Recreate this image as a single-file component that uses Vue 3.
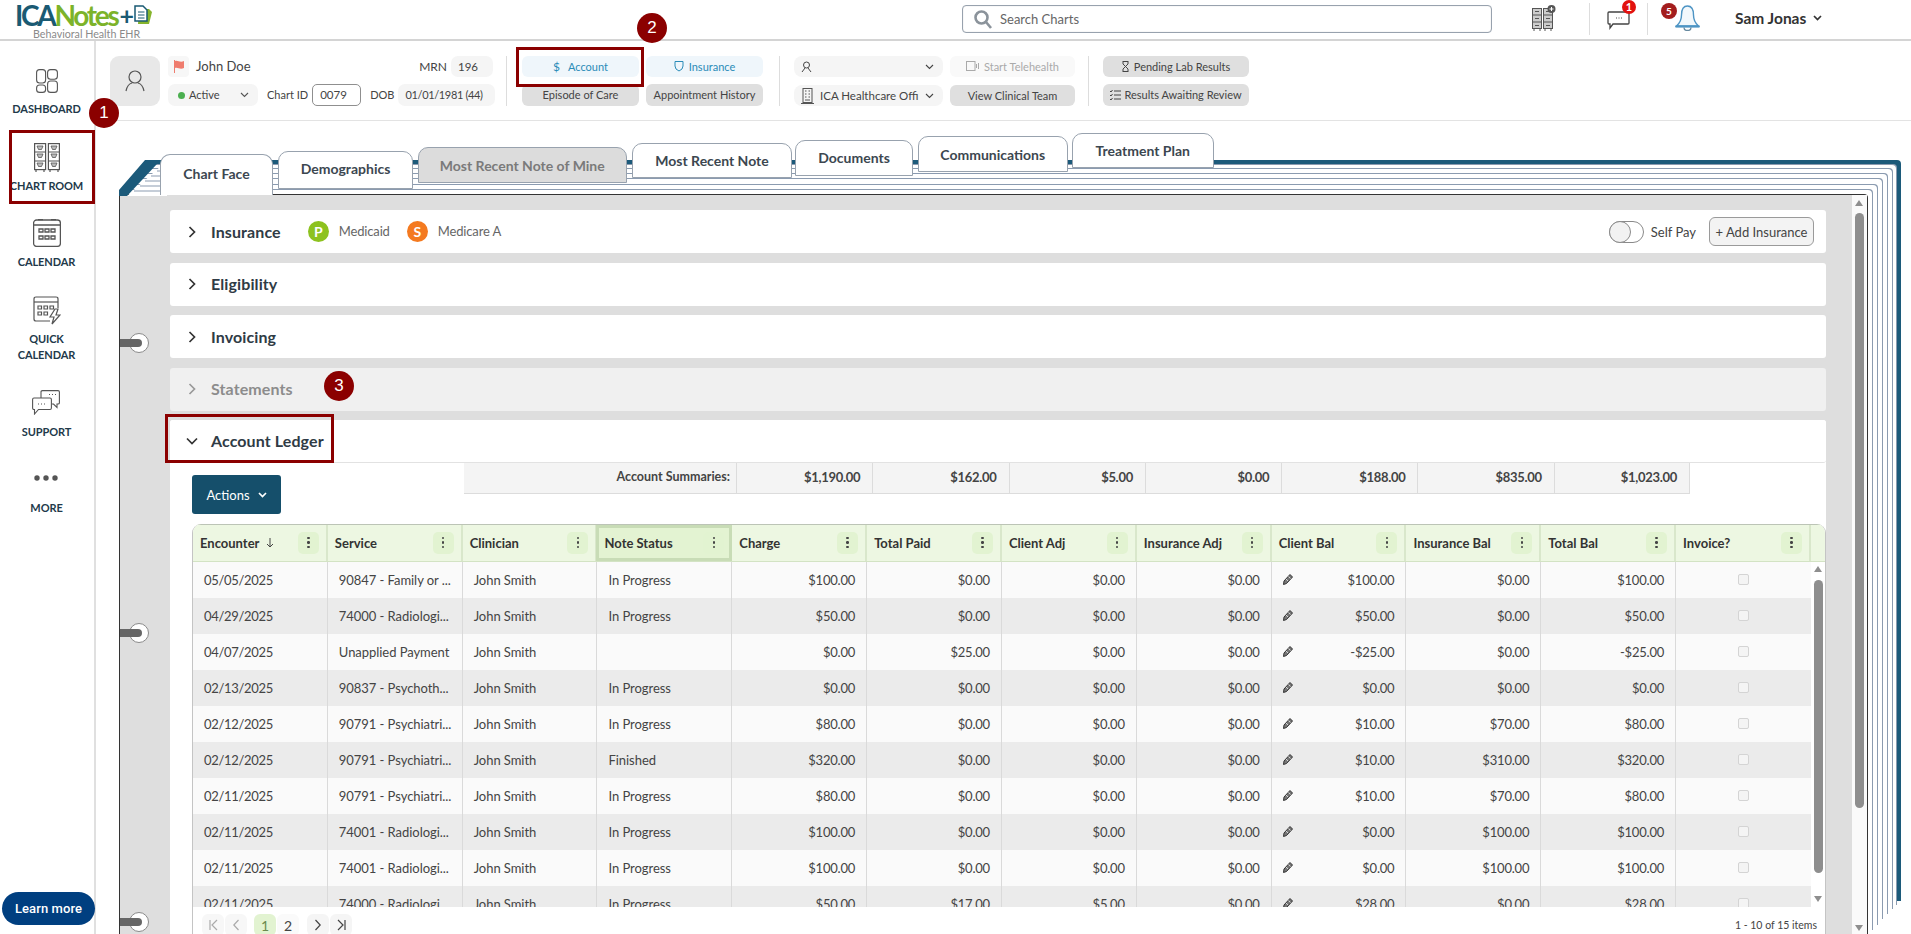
<script setup>
const tabs = [
  { label: 'Chart Face', w: 113, top: 21, h: 41, pb: 3, cls: 'active' },
  { label: 'Demographics', w: 135, top: 18, h: 38, gap: 5, pb: 3 },
  { label: 'Most Recent Note of Mine', w: 209.5, top: 14, h: 36, gap: 4.5, cls: 'muted' },
  { label: 'Most Recent Note', w: 160, top: 10, h: 35, gap: 5 },
  { label: 'Documents', w: 118, top: 7, h: 36, gap: 3, pb: 1 },
  { label: 'Communications', w: 150.5, top: 3, h: 36, gap: 4.5 },
  { label: 'Treatment Plan', w: 141.5, top: 0, h: 35, gap: 4 },
]
const summaries = ['$1,190.00', '$162.00', '$5.00', '$0.00', '$188.00', '$835.00', '$1,023.00']
const columns = ['Encounter', 'Service', 'Clinician', 'Note Status', 'Charge', 'Total Paid', 'Client Adj', 'Insurance Adj', 'Client Bal', 'Insurance Bal', 'Total Bal', 'Invoice?']
const rows = [
  ['05/05/2025', '90847 - Family or ...', 'In Progress', '$100.00', '$0.00', '$0.00', '$0.00', '$100.00', '$0.00', '$100.00'],
  ['04/29/2025', '74000 - Radiologi...', 'In Progress', '$50.00', '$0.00', '$0.00', '$0.00', '$50.00', '$0.00', '$50.00'],
  ['04/07/2025', 'Unapplied Payment', '', '$0.00', '$25.00', '$0.00', '$0.00', '-$25.00', '$0.00', '-$25.00'],
  ['02/13/2025', '90837 - Psychoth...', 'In Progress', '$0.00', '$0.00', '$0.00', '$0.00', '$0.00', '$0.00', '$0.00'],
  ['02/12/2025', '90791 - Psychiatri...', 'In Progress', '$80.00', '$0.00', '$0.00', '$0.00', '$10.00', '$70.00', '$80.00'],
  ['02/12/2025', '90791 - Psychiatri...', 'Finished', '$320.00', '$0.00', '$0.00', '$0.00', '$10.00', '$310.00', '$320.00'],
  ['02/11/2025', '90791 - Psychiatri...', 'In Progress', '$80.00', '$0.00', '$0.00', '$0.00', '$10.00', '$70.00', '$80.00'],
  ['02/11/2025', '74001 - Radiologi...', 'In Progress', '$100.00', '$0.00', '$0.00', '$0.00', '$0.00', '$100.00', '$100.00'],
  ['02/11/2025', '74001 - Radiologi...', 'In Progress', '$100.00', '$0.00', '$0.00', '$0.00', '$0.00', '$100.00', '$100.00'],
  ['02/11/2025', '74000 - Radiologi...', 'In Progress', '$50.00', '$17.00', '$5.00', '$0.00', '$28.00', '$0.00', '$28.00'],
]
const rings = [148, 438, 727]
</script>

<template>
  <div class="app">
    <header class="topbar">
      <div class="logo-area">
        <div class="logo">
          <div class="logo-line">
            <span class="logo-ica">ICA</span><span class="logo-notes">Notes</span><span class="logo-plus">+</span>
            <svg class="logo-doc" width="18" height="20" viewBox="0 0 18 20">
              <path d="M5 4 H15 L18 7 L15 19 H4 Z" fill="#86b42c"/>
              <path d="M1 1 H9 L13 5 V16 H1 Z" fill="#fff" stroke="#1a5a73" stroke-width="1.5"/>
              <path d="M4 7 H10.5 M4 10 H10.5 M4 13 H10.5" stroke="#1a5a73"/>
            </svg>
          </div>
          <div class="logo-sub">Behavioral Health EHR</div>
        </div>
      </div>
      <div class="search">
        <svg width="18" height="19" viewBox="0 0 18 19" fill="none" stroke="#8b939b" stroke-width="2.6">
          <circle cx="7.5" cy="7.5" r="6"/><path d="M12 12 L17 18"/>
        </svg>
        <span>Search Charts</span>
      </div>
      <svg class="ic-cabinet-add" width="24" height="26" viewBox="0 0 24 26" fill="none" stroke="#555">
        <rect x="0.5" y="3.5" width="9" height="20" fill="#ccc"/><rect x="11.5" y="3.5" width="9" height="20" fill="#ccc"/>
        <path d="M1 10 H9 M1 17 H9 M12 10 H20 M12 17 H20 M3 6.5 H7 M3 13.5 H7 M3 20.5 H7 M14 6.5 H18 M14 13.5 H18 M14 20.5 H18 M2 24 V26 M8 24 V26 M13 24 V26 M19 24 V26"/>
        <circle cx="19.5" cy="4" r="4" fill="#555" stroke="none"/>
        <path d="M17.5 4 H21.5 M19.5 2 V6" stroke="#fff"/>
      </svg>
      <span class="top-divider first"></span>
      <div class="chat">
        <svg width="23" height="19" viewBox="0 0 23 19" fill="none" stroke="#444" stroke-width="1.3">
          <path d="M2 1 H21 Q22 1 22 2 V12 Q22 13 21 13 H6 L3 17 V13 H2 Q1 13 1 12 V2 Q1 1 2 1 Z"/>
          <path d="M9 7 H10 M11.5 7 H12.5 M14 7 H15" stroke="#888"/>
        </svg>
        <span class="badge red">1</span>
      </div>
      <span class="top-divider"></span>
      <div class="bell">
        <svg width="25" height="26" viewBox="0 0 25 26" fill="none" stroke="#4d94c4" stroke-width="1.4">
          <path d="M12.5 1 C7.5 1 6.5 6 6.5 10 C6.5 15 5 18 1.5 21 H23.5 C20 18 18.5 15 18.5 10 C18.5 6 17.5 1 12.5 1 Z" fill="#f2f8fc"/>
          <path d="M0.5 21.5 H24.5" stroke="#4d94c4" stroke-width="2.2"/>
          <path d="M9 22.5 C9 26.5 16 26.5 16 22.5" stroke="#66899f"/>
        </svg>
        <span class="badge dark">5</span>
      </div>
      <span class="user">Sam Jonas</span>
      <svg class="user-caret" width="9" height="6" viewBox="0 0 9 6" fill="none" stroke="#333" stroke-width="1.7"><path d="M1 1 L4.5 4.5 L8 1"/></svg>
    </header>

    <div class="main">
      <aside class="sidebar">
        <div class="nav-item dash">
          <svg width="22" height="24" viewBox="0 0 22 24" fill="none" stroke="#555" stroke-width="1.1">
            <rect x="0.6" y="0.6" width="9" height="13.4" rx="3"/><rect x="11.6" y="0.6" width="9.8" height="9.6" rx="3"/>
            <rect x="0.6" y="16" width="9" height="7.4" rx="3"/><rect x="11.6" y="12" width="9.8" height="11.4" rx="3"/>
          </svg>
          <span>DASHBOARD</span>
        </div>
        <div class="nav-item chart">
          <svg width="26" height="29" viewBox="0 0 26 29" fill="none" stroke="#555" stroke-width="1.2">
            <rect x="0.6" y="0.6" width="11" height="26"/><rect x="14.4" y="0.6" width="11" height="26"/>
            <path d="M1 9 H11 M1 18 H11 M15 9 H25 M15 18 H25 M2 27 V29 M10 27 V29 M16 27 V29 M24 27 V29"/>
            <path d="M3 3 H9 L7.5 6.5 H4.5 Z M3 11 H9 L7.5 14.5 H4.5 Z M3 20 H9 L7.5 23.5 H4.5 Z M17 3 H23 L21.5 6.5 H18.5 Z M17 11 H23 L21.5 14.5 H18.5 Z M17 20 H23 L21.5 23.5 H18.5 Z" fill="#bbb" stroke-width="0.8"/>
          </svg>
          <span>CHART ROOM</span>
        </div>
        <div class="nav-item cal">
          <svg width="28" height="28" viewBox="0 0 28 28" fill="none" stroke="#555" stroke-width="1.3">
            <rect x="0.6" y="1" width="26.8" height="26.4" rx="3"/><path d="M1 6 H27 M5 0.6 H10 M18 0.6 H23"/>
            <path d="M6 10 H10 V13 H6 Z M12 10 H16 V13 H12 Z M18 10 H22 V13 H18 Z M6 17 H10 V20 H6 Z M12 17 H16 V20 H12 Z M18 17 H22 V20 H18 Z"/>
          </svg>
          <span>CALENDAR</span>
        </div>
        <div class="nav-item quick">
          <svg width="28" height="29" viewBox="0 0 28 29" fill="none" stroke="#555" stroke-width="1.2">
            <path d="M25 12 V3 Q25 1 23 1 H3 Q1 1 1 3 V23 Q1 25 3 25 H17"/><path d="M1 6 H25"/>
            <path d="M5 10 H8.5 V13 H5 Z M11 10 H14.5 V13 H11 Z M17 10 H20.5 V13 H17 Z M5 16 H8.5 V19 H5 Z M11 16 H14.5 V19 H11 Z"/>
            <path d="M22 13 L17 21 H21 L19 28 L27 19 H23 L25 13 Z" fill="#fff"/>
          </svg>
          <span>QUICK<br>CALENDAR</span>
        </div>
        <div class="nav-item support">
          <svg width="28" height="25" viewBox="0 0 28 25" fill="none" stroke="#555" stroke-width="1.1">
            <path d="M9 9 V2 Q9 0.6 10.5 0.6 H26 Q27.4 0.6 27.4 2 V13 Q27.4 14 26 14 H25 V17.5 L21.5 14 H20"/>
            <path d="M2 8 H18 Q19.4 8 19.4 9.5 V18 Q19.4 19.5 18 19.5 H6.5 L2.5 24 V19.5 H2 Q0.6 19.5 0.6 18 V9.5 Q0.6 8 2 8 Z" fill="#fff"/>
            <path d="M6 14 H7 M9 14 H10 M12 14 H13 M17 4.5 H18 M20 4.5 H21 M23 4.5 H24"/>
          </svg>
          <span>SUPPORT</span>
        </div>
        <div class="nav-item more">
          <svg width="24" height="8" viewBox="0 0 24 8" fill="#555"><circle cx="3" cy="4" r="2.7"/><circle cx="12" cy="4" r="2.7"/><circle cx="21" cy="4" r="2.7"/></svg>
          <span>MORE</span>
        </div>
        <button class="learn">Learn more</button>
      </aside>

      <div class="workspace">
        <section class="patient">
          <div class="avatar">
            <svg width="20" height="22" viewBox="0 0 20 22" fill="none" stroke="#555" stroke-width="1.2">
              <circle cx="10" cy="7" r="6"/><path d="M1 21 Q2.5 14 7 13 M19 21 Q17.5 14 13 13"/>
            </svg>
          </div>
          <div class="pat-info">
            <div class="pat-row r1">
              <span class="flag-box">
                <svg width="12" height="13" viewBox="0 0 12 13"><path d="M1 0 H2 V13 H1 Z" fill="#ef7c6e"/><path d="M2 1 C5 0 7 3 11 1 V8 C7 10 5 7 2 8 Z" fill="#ef7c6e"/></svg>
              </span>
              <span class="pat-name">John Doe</span>
              <span class="spacer"></span>
              <span class="lbl mrn-lbl">MRN</span>
              <span class="val mrn">196</span>
            </div>
            <div class="pat-row r2">
              <span class="val status"><i class="dot"></i>Active
                <svg class="chev" width="9" height="6" viewBox="0 0 9 6" fill="none" stroke="#555" stroke-width="1.1"><path d="M1 1 L4.5 4.5 L8 1"/></svg>
              </span>
              <span class="lbl cid">Chart ID</span>
              <span class="cid-input">0079</span>
              <span class="lbl dob">DOB</span>
              <span class="val dobv">01/01/1981 (44)</span>
            </div>
          </div>
          <span class="pat-div d1"></span>
          <div class="btn-grid">
            <button class="pbtn blue r1">
              <span class="glyph">$</span>Account
            </button>
            <button class="pbtn blue r1">
              <svg width="10" height="12" viewBox="0 0 10 12" fill="none" stroke="#2b8cb8"><path d="M1 1.5 H9 V6 Q9 9.5 5 11 Q1 9.5 1 6 Z"/></svg>Insurance
            </button>
            <button class="pbtn gray r2">Episode of Care</button>
            <button class="pbtn gray r2">Appointment History</button>
          </div>
          <span class="pat-div d2"></span>
          <div class="tele-grid">
            <div class="sel r1">
              <svg width="11" height="12" viewBox="0 0 11 12" fill="none" stroke="#444"><circle cx="5.5" cy="4" r="3"/><path d="M1 11 L4 7 M10 11 L7 7"/></svg>
              <svg class="chev" width="9" height="6" viewBox="0 0 9 6" fill="none" stroke="#444" stroke-width="1.1"><path d="M1 1 L4.5 4.5 L8 1"/></svg>
            </div>
            <button class="pbtn faint r1">
              <svg width="13" height="10" viewBox="0 0 13 10" fill="none" stroke="#aaa"><rect x="0.5" y="0.5" width="8.5" height="9"/><path d="M10.5 3 V7 M12.5 2 V8"/></svg>Start Telehealth
            </button>
            <div class="sel r2x">
              <svg width="13" height="16" viewBox="0 0 13 16" fill="none" stroke="#555"><rect x="2" y="0.5" width="9" height="14"/><path d="M0 15.5 H13 M4 3 H5.5 M7.5 3 H9 M4 6 H5.5 M7.5 6 H9 M4 9 H5.5 M7.5 9 H9 M4 12 H9"/></svg>
              <span>ICA Healthcare Offi</span>
              <svg class="chev" width="9" height="6" viewBox="0 0 9 6" fill="none" stroke="#444" stroke-width="1.1"><path d="M1 1 L4.5 4.5 L8 1"/></svg>
            </div>
            <button class="pbtn gray r2x">View Clinical Team</button>
          </div>
          <span class="pat-div d3"></span>
          <div class="lab-col">
            <button class="pbtn gray r1">
              <svg width="7" height="11" viewBox="0 0 7 11" fill="none" stroke="#444"><path d="M0.5 0.5 H6.5 M0.5 10.5 H6.5 M1 1 V3 L6 8 V10 M6 1 V3 L1 8 V10"/></svg>Pending Lab Results
            </button>
            <button class="pbtn gray r2 tight">
              <svg width="11" height="10" viewBox="0 0 11 10" fill="none" stroke="#444"><path d="M4 1 H11 M4 5 H11 M4 9 H11 M0 1 L1 2 L2.5 0 M0 5 L1 6 L2.5 4 M0 9 L1 10 L2.5 8"/></svg>Results Awaiting Review
            </button>
          </div>
        </section>

        <div class="book">
          <div class="tabs">
            <div
              v-for="t in tabs"
              :key="t.label"
              class="tab"
              :class="t.cls"
              :style="{ width: t.w + 'px', height: t.h + 'px', marginTop: t.top + 'px', marginLeft: (t.gap || 0) + 'px', paddingBottom: (t.pb || 0) + 'px' }"
            >{{ t.label }}</div>
          </div>
          <svg class="corner" width="48" height="36" viewBox="0 0 48 36">
            <path d="M8 36 L42 6 H48 V36 Z" fill="#fff"/>
            <path d="M38 11 H48 M32 16 H48 M26 21 H48 M21 26 H48 M15 31 H48" stroke="#8b9bb0"/>
            <path d="M0 36 V30 L26 0 H48 V4 H38 L8 36 Z" fill="#1c5a7a"/>
          </svg>
          <div class="page">
            <div v-for="r in rings" :key="r" class="ring" :style="{ top: r + 'px' }"><i></i></div>
            <div class="content">
              <div class="card">
                <svg class="caret" width="8" height="12" viewBox="0 0 8 12" fill="none" stroke="#333" stroke-width="1.7"><path d="M1.5 1 L6.5 6 L1.5 11"/></svg>
                <span class="title">Insurance</span>
                <span class="payer green">P</span><span class="payer-name">Medicaid</span>
                <span class="payer orange">S</span><span class="payer-name">Medicare A</span>
                <span class="spacer"></span>
                <span class="toggle"><i></i></span>
                <span class="selfpay">Self Pay</span>
                <button class="add">+ Add Insurance</button>
              </div>
              <div class="card">
                <svg class="caret" width="8" height="12" viewBox="0 0 8 12" fill="none" stroke="#333" stroke-width="1.7"><path d="M1.5 1 L6.5 6 L1.5 11"/></svg>
                <span class="title">Eligibility</span>
              </div>
              <div class="card">
                <svg class="caret" width="8" height="12" viewBox="0 0 8 12" fill="none" stroke="#333" stroke-width="1.7"><path d="M1.5 1 L6.5 6 L1.5 11"/></svg>
                <span class="title">Invoicing</span>
              </div>
              <div class="card dim">
                <svg class="caret" width="8" height="12" viewBox="0 0 8 12" fill="none" stroke="#999" stroke-width="1.7"><path d="M1.5 1 L6.5 6 L1.5 11"/></svg>
                <span class="title">Statements</span>
              </div>
              <div class="ledger">
                <div class="card ledger-head">
                  <svg class="caret down" width="12" height="8" viewBox="0 0 12 8" fill="none" stroke="#333" stroke-width="1.7"><path d="M1 1.5 L6 6.5 L11 1.5"/></svg>
                  <span class="title">Account Ledger</span>
                </div>
                <div class="ledger-top">
                  <button class="actions">Actions
                    <svg width="9" height="6" viewBox="0 0 9 6" fill="none" stroke="#fff" stroke-width="1.7"><path d="M1 1 L4.5 4.5 L8 1"/></svg>
                  </button>
                  <div class="summaries">
                    <div class="sum-label">Account Summaries:</div>
                    <div v-for="(s, i) in summaries" :key="i" class="sum-cell">{{ s }}</div>
                  </div>
                </div>
                <div class="table">
                  <div class="thead">
                    <div v-for="c in columns" :key="c" class="th" :class="{ focus: c === 'Note Status' }">
                      <span>{{ c }}</span>
                      <svg v-if="c === 'Encounter'" class="sort" width="8" height="10" viewBox="0 0 8 10" fill="none" stroke="#444"><path d="M4 0 V9 M1 6 L4 9 L7 6"/></svg>
                      <span class="kebab"><i></i><i></i><i></i></span>
                    </div>
                    <div class="th-fill"></div>
                  </div>
                  <div class="tbody-wrap">
                    <div class="tbody">
                      <div v-for="(row, i) in rows" :key="i" class="tr">
                        <div class="td date">{{ row[0] }}</div>
                        <div class="td">{{ row[1] }}</div>
                        <div class="td">John Smith</div>
                        <div class="td">{{ row[2] }}</div>
                        <div class="td num">{{ row[3] }}</div>
                        <div class="td num">{{ row[4] }}</div>
                        <div class="td num">{{ row[5] }}</div>
                        <div class="td num">{{ row[6] }}</div>
                        <div class="td num bal">
                          <svg width="10" height="11" viewBox="0 0 10 11"><path d="M7 0.5 L9.5 3 L3.5 9.5 L0.5 10.5 L1 7 Z" fill="#777" stroke="#333"/><path d="M5.5 2.5 L7.5 4.5 M3 5 L5 7" stroke="#eee" stroke-width="0.8"/></svg>
                          <span>{{ row[7] }}</span>
                        </div>
                        <div class="td num">{{ row[8] }}</div>
                        <div class="td num">{{ row[9] }}</div>
                        <div class="td center"><i class="check"></i></div>
                      </div>
                    </div>
                    <div class="t-scroll">
                      <i class="arr up"></i>
                      <i class="thumb"></i>
                      <i class="arr dn"></i>
                    </div>
                  </div>
                  <div class="pager">
                    <span class="pg faint">
                      <svg width="9" height="12" viewBox="0 0 9 12" fill="none" stroke="#aaa" stroke-width="1.2"><path d="M1 1 V11 M8 1 L3 6 L8 11"/></svg>
                    </span>
                    <span class="pg faint">
                      <svg width="6" height="12" viewBox="0 0 6 12" fill="none" stroke="#aaa" stroke-width="1.2"><path d="M5.5 1 L0.8 6 L5.5 11"/></svg>
                    </span>
                    <span class="pg cur">1</span>
                    <span class="pg plain">2</span>
                    <span class="pg next">
                      <svg width="6" height="12" viewBox="0 0 6 12" fill="none" stroke="#444" stroke-width="1.2"><path d="M0.5 1 L5.2 6 L0.5 11"/></svg>
                    </span>
                    <span class="pg">
                      <svg width="9" height="12" viewBox="0 0 9 12" fill="none" stroke="#444" stroke-width="1.2"><path d="M8 1 V11 M1 1 L6 6 L1 11"/></svg>
                    </span>
                    <span class="spacer"></span>
                    <span class="items">1 - 10 of 15 items</span>
                  </div>
                </div>
              </div>
            </div>
            <div class="p-scroll">
              <i class="arr up"></i>
              <i class="thumb"></i>
              <i class="arr dn"></i>
            </div>
          </div>
        </div>
      </div>
    </div>

    <div class="mark-box b-chart"></div>
    <div class="mark-box b-account"></div>
    <div class="mark-box b-ledger"></div>
    <span class="mark m1">1</span>
    <span class="mark m2">2</span>
    <span class="mark m3">3</span>
  </div>
</template>

<style scoped>
.app { position: relative; width: 1911px; height: 934px; overflow: hidden; background: #fff; font-family: Lato, "Open Sans", sans-serif; color: #333; font-size: 13px; }
button { font-family: inherit; border: 0; padding: 0; }
.spacer { flex: 1; }

.topbar { height: 41px; box-sizing: border-box; border-bottom: 2px solid #d4d4d4; display: flex; align-items: center; }
.logo-area { width: 962px; padding-left: 15px; box-sizing: border-box; align-self: flex-start; flex: none; }
.logo { width: 140px; padding-top: 2px; }
.logo-line { display: flex; align-items: center; height: 26px; }
.logo-ica { font-size: 28px; font-weight: 700; color: #1a5a73; letter-spacing: -2.3px; line-height: 34px; }
.logo-notes { font-size: 28px; font-weight: 700; color: #7cb32a; letter-spacing: -2.3px; line-height: 34px; }
.logo-plus { font-size: 25px; font-weight: 700; color: #1a5a73; margin-left: 2px; line-height: 30px; }
.logo-doc { flex: none; margin-left: 0; }
.logo-sub { font-size: 10.7px; color: #8a8a8a; padding-left: 18px; line-height: 12px; white-space: nowrap; }
.search { width: 530px; height: 28px; margin-top: -1px; flex: none; box-sizing: border-box; border: 1px solid #98a2ae; border-radius: 4px; display: flex; align-items: center; padding-left: 11px; gap: 8px; color: #666; font-size: 13px; box-shadow: inset 0 0 1px #bbb; }
.ic-cabinet-add { margin-left: 40px; margin-top: -4px; flex: none; }
.top-divider { width: 1px; height: 32px; background: #ddd; margin-left: 17px; margin-top: -2px; flex: none; }
.top-divider.first { margin-left: 33px; }
.chat { position: relative; margin-left: 17px; width: 23px; height: 19px; margin-top: 1px; flex: none; }
.badge { position: absolute; border-radius: 50%; color: #fff; font-weight: 700; display: flex; align-items: center; justify-content: center; }
.badge.red { width: 14px; height: 14px; font-size: 11px; background: #e2120f; right: -6px; top: -11px; }
.bell { position: relative; margin-left: 27px; margin-top: -3px; width: 25px; height: 26px; flex: none; }
.badge.dark { width: 16px; height: 16px; font-size: 10px; background: #a31d1d; left: -14px; top: -2px; }
.user { margin-left: 35px; margin-right: 7px; margin-top: -3px; font-size: 15.5px; font-weight: 700; color: #333; }
.user-caret { margin-top: -3px; }

.main { display: flex; height: 893px; }
.sidebar { width: 96px; box-sizing: border-box; border-right: 2px solid #e0e0e0; flex: none; display: flex; flex-direction: column; align-items: center; padding-right: 1px; }
.nav-item { display: flex; flex-direction: column; align-items: center; }
.nav-item span { font-size: 11px; line-height: 16px; font-weight: 700; color: #22394a; text-align: center; letter-spacing: -0.1px; white-space: nowrap; }
.dash { margin-top: 28px; }
.dash span { margin-top: 8px; }
.chart { margin-top: 26px; }
.chart span { margin-top: 6px; }
.cal { margin-top: 25px; }
.cal span { margin-top: 7px; }
.quick { margin-top: 26px; }
.quick span { margin-top: 6px; }
.support { margin-top: 27px; }
.support span { margin-top: 9px; }
.more { margin-top: 34px; }
.more span { margin-top: 18px; }
.learn { margin-top: auto; margin-bottom: 9px; margin-left: 2px; align-self: flex-start; width: 93px; height: 33px; border-radius: 17px; background: #003f80; color: #fff; font-family: Roboto, sans-serif; font-weight: 500; font-size: 13px; letter-spacing: 0.1px; }

.workspace { flex: 1; min-width: 0; }
.patient { height: 80px; box-sizing: border-box; border-bottom: 1px solid #e3e3e3; padding: 15px 0 0 14px; display: flex; align-items: flex-start; }
.avatar { width: 50px; height: 50px; border-radius: 9px; background: #e8e8e8; display: flex; align-items: center; justify-content: center; flex: none; }
.pat-info { width: 325px; margin-left: 8px; display: flex; flex-direction: column; gap: 7px; flex: none; }
.pat-row { display: flex; align-items: center; }
.r1 { height: 21px; }
.r2 { height: 22px; }
.r2x { height: 21px; }
.flag-box { width: 21px; height: 21px; border-radius: 4px; background: #f7f7f7; display: flex; align-items: center; justify-content: center; }
.pat-name { margin-left: 7px; font-size: 13px; color: #444; padding-bottom: 2px; }
.lbl { font-size: 11px; color: #444; white-space: nowrap; flex: none; padding-bottom: 1px; }
.mrn-lbl { font-size: 12px; }
.val { background: #f5f5f5; border-radius: 7px; font-size: 11.5px; color: #444; height: 100%; display: flex; align-items: center; box-sizing: border-box; padding-bottom: 1px; flex: none; }
.mrn { width: 42px; margin-left: 4px; padding-left: 7px; }
.status { width: 90px; padding-left: 10px; position: relative; font-size: 11px; }
.dot { width: 7px; height: 7px; border-radius: 50%; background: #4caf50; margin-right: 4px; margin-top: 1px; }
.chev { position: absolute; right: 9px; top: 50%; margin-top: -3px; }
.cid { margin-left: 9px; }
.cid-input { width: 49px; height: 22px; flex: none; box-sizing: border-box; border: 1px solid #8f8f8f; border-radius: 5px; margin-left: 4px; padding-left: 7px; font-size: 11.5px; line-height: 19px; color: #444; }
.dob { margin-left: 9px; }
.dobv { width: 97px; margin-left: 4px; padding-left: 7px; white-space: nowrap; font-size: 11px; letter-spacing: -0.35px; }
.pat-div { width: 1px; height: 50px; background: #ddd; flex: none; }
.d1 { margin-left: 13px; }
.d2 { margin-left: 16px; }
.d3 { margin-left: 13px; }
.btn-grid { margin-left: 15px; display: grid; grid-template-columns: 117px 117px; gap: 7px 7px; flex: none; }
.pbtn { border-radius: 6px; font-size: 11px; display: flex; align-items: center; justify-content: center; gap: 5px; color: #444; white-space: nowrap; padding-bottom: 1px; box-sizing: border-box; }
.blue { background: #eff6fb; color: #2b8cb8; }
.gray { background: #dfdfdf; color: #444; }
.faint { background: #f9f9f9; color: #aaa; }
.glyph { font-size: 12px; margin-right: 3px; }
.tele-grid { margin-left: 14px; display: grid; grid-template-columns: 149px 125px; gap: 8px 7px; flex: none; }
.sel { position: relative; background: #f5f5f5; border-radius: 8px; display: flex; align-items: center; padding-left: 7px; gap: 6px; font-size: 11.5px; color: #444; white-space: nowrap; }
.lab-col { margin-left: 14px; width: 146px; display: flex; flex-direction: column; gap: 7px; flex: none; }
.tight { gap: 3px; }

.book { position: relative; margin-left: 23px; width: 1749px; padding-top: 12px; }
.tabs { position: relative; z-index: 3; display: flex; align-items: flex-start; padding-left: 41px; height: 61px; }
.tab { flex: none; box-sizing: border-box; border: 1px solid #98a2ae; border-radius: 10px 10px 0 0; background: #fff; font-size: 14px; font-weight: 700; color: #3c4750; display: flex; align-items: center; justify-content: center; white-space: nowrap; }
.tab.active { border-bottom: 0; }
.tab.muted { background: #dcdcdc; color: #7a7a7a; }
.corner { position: absolute; left: 0; top: 39px; z-index: 2; }
.page { position: relative; height: 741px; box-sizing: border-box; border: 1px solid #333; border-bottom: 0; border-radius: 0 4px 0 0; background: #dedede; display: flex;
  box-shadow:
    4px -4px 0 0 #fff, 5px -5px 0 0 #8b9bb0,
    9px -9px 0 0 #fff, 10px -10px 0 0 #8b9bb0,
    14px -15px 0 0 #fff, 15px -16px 0 0 #8b9bb0,
    19px -20px 0 0 #fff, 20px -21px 0 0 #8b9bb0,
    24px -25px 0 0 #fff, 25px -26px 0 0 #8b9bb0,
    28px -29px 0 0 #fff, 29px -30px 0 0 #8b9bb0,
    33px -34px 0 0 #1c5a7a;
}
.ring { position: absolute; left: 9px; width: 20px; height: 20px; margin-top: -10px; box-sizing: border-box; border: 1px solid #8a8a8a; border-radius: 50%; background: #fff; z-index: 1; }
.ring i { position: absolute; left: -10px; top: 5px; width: 22px; height: 8px; border-radius: 0 4px 4px 0; background: #666; }
.content { flex: 1; min-width: 0; padding: 15px 26px 0 50px; display: flex; flex-direction: column; gap: 9.5px; overflow: hidden; }
.card { flex: none; height: 43px; background: #fff; border-radius: 3px; display: flex; align-items: center; padding-left: 18px; padding-right: 12px; }
.caret { flex: none; }
.caret.down { margin-left: -2px; margin-right: -2px; }
.title { margin-left: 15px; font-size: 16px; font-weight: 700; color: #2f3b45; letter-spacing: 0.1px; padding-bottom: 1px; }
.dim { background: #f0f0f0; }
.dim .title { color: #8c8c8c; }
.payer { width: 21px; height: 21px; border-radius: 50%; color: #fff; font-weight: 700; font-size: 14px; display: flex; align-items: center; justify-content: center; flex: none; }
.green { background: #8dc21f; margin-left: 27px; }
.orange { background: #f47a20; margin-left: 17px; }
.payer-name { margin-left: 10px; font-size: 13px; color: #666; letter-spacing: -0.15px; padding-bottom: 1px; }
.toggle { width: 35px; height: 22px; box-sizing: border-box; border: 1px solid #8a8a8a; border-radius: 11px; position: relative; background: #fff; }
.toggle i { position: absolute; left: -1px; top: -1px; width: 22px; height: 22px; box-sizing: border-box; border: 1px solid #8a8a8a; border-radius: 50%; background: #f2f2f2; }
.selfpay { margin-left: 7px; font-size: 13px; color: #444; }
.add { margin-left: 13px; width: 105px; height: 29px; border: 1px solid #9a9a9a; border-radius: 6px; background: #f3f3f3; font-size: 13px; color: #444; }

.ledger { flex: 1; min-height: 0; background: #fff; border-radius: 3px 3px 0 0; display: flex; flex-direction: column; }
.ledger-head { border-bottom: 1px solid #e2e2e2; height: 43px; box-sizing: border-box; }
.ledger-top { flex: none; height: 61px; display: flex; align-items: flex-start; }
.actions { width: 89px; height: 39px; margin: 12px 0 0 22px; border-radius: 3px; background: #154f6b; color: #fff; font-size: 13px; display: flex; align-items: center; justify-content: center; gap: 8px; flex: none; }
.summaries { margin-left: 183px; height: 31px; display: flex; background: #f4f4f4; border-bottom: 1px solid #dcdcdc; box-sizing: border-box; font-weight: 700; font-size: 13px; color: #444; }
.sum-label { width: 272px; text-align: right; padding-right: 6px; box-sizing: border-box; line-height: 28px; white-space: nowrap; font-size: 12.5px; }
.sum-cell { width: 136.3px; box-sizing: border-box; border-left: 1px solid #dcdcdc; text-align: right; padding-right: 12px; line-height: 28px; letter-spacing: -0.3px; }
.sum-cell:last-child { border-right: 1px solid #dcdcdc; }

.table { flex: 1; min-height: 0; margin: 0 0 0 22px; box-sizing: border-box; border-left: 1px solid #c4c4c4; border-right: 1px solid #c4c4c4; border-radius: 9px 9px 0 0; display: flex; flex-direction: column; overflow: hidden; width: 1634px; }
.thead, .tr { display: grid; grid-template-columns: repeat(12, 134.83px); }
.thead { height: 38px; flex: none; box-sizing: border-box; border-top: 1px solid #bcc4b6; border-bottom: 1px solid #d3e3c4; background: #edf7e2; grid-template-columns: repeat(12, 134.83px) 1fr; }
.th { display: flex; align-items: center; padding: 0 7px 1px 7px; box-sizing: border-box; border-right: 2px solid #d9e7cb; font-weight: 700; font-size: 13px; color: #333; white-space: nowrap; min-width: 0; }
.th.focus { background: #e3f3d2; border: 3px solid #c8dcb6; padding-left: 5px; padding-right: 5px; margin-left: -1px; }
.sort { margin-left: 7px; }
.kebab { margin-left: auto; width: 21px; height: 22px; border-radius: 5px; background: #e2f3d1; display: flex; flex-direction: column; align-items: center; justify-content: center; gap: 2px; }
.kebab i { width: 2.4px; height: 2.4px; border-radius: 50%; background: #444; }
.tbody-wrap { flex: 1; min-height: 0; display: flex; overflow: hidden; }
.tbody { flex: none; width: 1618px; }
.tr { height: 36px; background: #fafafa; }
.tr:nth-child(even) { background: #ebebeb; }
.td { display: flex; align-items: center; padding: 0 11px 1px; box-sizing: border-box; border-right: 1px solid #dadada; font-size: 13px; color: #444; white-space: nowrap; letter-spacing: -0.05px; }
.date { letter-spacing: -0.3px; }
.num { justify-content: flex-end; letter-spacing: -0.2px; }
.bal { justify-content: space-between; }
.center { justify-content: center; border-right: 0; }
.check { width: 11px; height: 11px; box-sizing: border-box; border: 1px solid #d4d4d4; border-radius: 2px; background: #f4f4f4; }
.t-scroll { flex: 1; position: relative; background: #fff; }
.t-scroll .thumb { position: absolute; left: 3px; top: 18px; width: 9px; height: 293px; border-radius: 5px; background: #8e8e8e; }
.arr { position: absolute; left: 3px; width: 0; height: 0; border-left: 4.5px solid transparent; border-right: 4.5px solid transparent; }
.arr.up { top: 4px; border-bottom: 6px solid #8e8e8e; }
.arr.dn { bottom: 5px; border-top: 6px solid #8e8e8e; }
.pager { flex: none; height: 28px; display: flex; align-items: flex-start; padding: 7px 8px 0 9px; background: #fff; box-sizing: border-box; }
.pg { width: 22px; height: 22px; flex: none; border-radius: 6px; background: #f5f5f5; display: flex; align-items: center; justify-content: center; font-size: 14px; color: #444; margin-right: 1px; }
.pg.faint { background: #f7f7f7; }
.pg.cur { background: #e2f3d1; color: #6b8a4e; margin-left: 6px; }
.pg.plain { background: #fafafa; }
.pg.next { margin-left: 7px; }
.items { font-size: 10.5px; color: #444; line-height: 22px; }
.p-scroll { position: relative; width: 15px; flex: none; background: #fafafa; }
.p-scroll .thumb { position: absolute; left: 3px; top: 18px; width: 9px; height: 595px; border-radius: 5px; background: #8e8e8e; }
.p-scroll .arr.up { top: 5px; }
.p-scroll .arr.dn { bottom: 4px; }

.mark-box { position: absolute; box-sizing: border-box; border: 3px solid #8b0000; z-index: 6; }
.b-chart { left: 9px; top: 130px; width: 86px; height: 74px; }
.b-account { left: 516px; top: 47px; width: 128px; height: 40px; }
.b-ledger { left: 165px; top: 414px; width: 169px; height: 49px; }
.mark { position: absolute; width: 30px; height: 30px; margin: -15px 0 0 -15px; border-radius: 50%; background: #8b0000; color: #fff; font-family: "Liberation Sans", sans-serif; font-size: 17px; display: flex; align-items: center; justify-content: center; z-index: 7; }
.m1 { left: 104px; top: 113px; }
.m2 { left: 652px; top: 28px; }
.m3 { left: 339px; top: 386px; }
</style>

<style>
html, body { margin: 0; overflow: hidden; }
</style>
